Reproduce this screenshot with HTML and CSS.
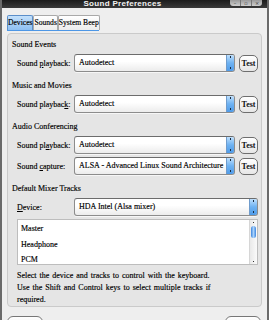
FILE: index.html
```html
<!DOCTYPE html>
<html lang="en">
<head>
    <meta charset="UTF-8">
    <meta name="viewport" content="width=device-width, initial-scale=1.0">
    <title>Sound Preferences</title>
    <link rel="stylesheet" href="styles.css">
</head>
<body>
    <div class="window">
        <div class="titlebar">
            <span class="title">Sound Preferences</span>
            <div class="wm-buttons">
                <span class="wm-btn">&#8211;</span>
                <span class="wm-btn">&#9643;</span>
                <span class="wm-btn">&#215;</span>
            </div>
        </div>

        <div class="content">
            <div class="tabs">
                <div class="tab active">Devices</div>
                <div class="tab">Sounds</div>
                <div class="tab">System Beep</div>
            </div>

            <div class="panel">
                <div class="section">
                    <div class="heading">Sound Events</div>
                    <div class="row">
                        <label class="field-label">Sound <u>p</u>layback:</label>
                        <div class="combo"><span class="combo-text">Autodetect</span><span class="combo-arrow"></span></div>
                        <button class="test">Test</button>
                    </div>
                </div>

                <div class="section">
                    <div class="heading">Music and Movies</div>
                    <div class="row">
                        <label class="field-label">Sound playbac<u>k</u>:</label>
                        <div class="combo"><span class="combo-text">Autodetect</span><span class="combo-arrow"></span></div>
                        <button class="test">Test</button>
                    </div>
                </div>

                <div class="section">
                    <div class="heading">Audio Conferencing</div>
                    <div class="row">
                        <label class="field-label">Sound pl<u>a</u>yback:</label>
                        <div class="combo"><span class="combo-text">Autodetect</span><span class="combo-arrow"></span></div>
                        <button class="test">Test</button>
                    </div>
                    <div class="row">
                        <label class="field-label">Sound <u>c</u>apture:</label>
                        <div class="combo"><span class="combo-text">ALSA - Advanced Linux Sound Architecture</span><span class="combo-arrow"></span></div>
                        <button class="test">Test</button>
                    </div>
                </div>

                <div class="section">
                    <div class="heading">Default Mixer Tracks</div>
                    <div class="row">
                        <label class="field-label"><u>D</u>evice:</label>
                        <div class="combo"><span class="combo-text">HDA Intel (Alsa mixer)</span><span class="combo-arrow"></span></div>
                    </div>
                    <div class="track-list">
                        <ul class="tracks">
                            <li>Master</li>
                            <li>Headphone</li>
                            <li>PCM</li>
                        </ul>
                        <div class="scrollbar">
                            <span class="sb-arrow"></span>
                            <span class="sb-thumb"></span>
                            <span class="sb-arrow"></span>
                        </div>
                    </div>
                    <p class="hint">Select the device and tracks to control with the keyboard.<br>
                        Use the Shift and Control keys to select multiple tracks if<br>
                        required.</p>
                </div>
            </div>

            <div class="buttons">
                <button class="btn"></button>
                <button class="btn"></button>
            </div>
        </div>
    </div>
</body>
</html>
```

FILE: styles.css
```css
body {
    margin: 0;
    font-family: "Liberation Serif", serif;
    font-size: 8px;
    color: #000;
    background: #ececec;
    -webkit-text-stroke: 0.15px #000;
}
.window {
    width: 269px;
    height: 320px;
    overflow: hidden;
    box-sizing: border-box;
    border-left: 2px solid #6a6a6a;
    border-right: 2px solid #6a6a6a;
    background: #eeeeee;
}
.titlebar {
    height: 8px;
    background: linear-gradient(#1c1c1c, #3a3a3a);
    display: flex;
    align-items: flex-end;
    position: relative;
    overflow: hidden;
}
.title {
    flex: 1;
    text-align: center;
    padding-right: 24px;
    font-family: "Liberation Sans", sans-serif;
    font-weight: bold;
    font-size: 8px;
    line-height: 8px;
    letter-spacing: 0.3px;
    color: #f2f2f2;
    -webkit-text-stroke: 0;
}
.wm-buttons {
    position: absolute;
    right: 5px;
    top: 0;
    display: flex;
    height: 6px;
    border-radius: 0 0 3px 3px;
    background: linear-gradient(#9a9a9a, #cfcfcf);
    overflow: hidden;
}
.wm-btn {
    width: 10px;
    font-family: "DejaVu Sans", sans-serif;
    font-size: 5px;
    line-height: 6px;
    text-align: center;
    color: #333;
    border-left: 1px solid #777;
    -webkit-text-stroke: 0;
}
.wm-btn:first-child {
    border-left: none;
}
.content {
    padding: 7px 5px 0 5px;
}
.tabs {
    display: flex;
    height: 15px;
    width: 92px;
    border-bottom: 1px solid #4d97e6;
}
.tab {
    padding: 0;
    font-size: 7.6px;
    line-height: 14px;
    white-space: nowrap;
    border: 1px solid #a9a9a9;
    border-bottom: none;
    border-radius: 2px 2px 0 0;
    background: linear-gradient(#ffffff, #ececec);
}
.tab.active {
    background: linear-gradient(#c3e0fb, #8ec0f2);
    border-color: #5b8ec9;
}
.panel {
    margin-top: 2px;
    height: 274px;
    box-sizing: border-box;
    border: 1px solid #cacaca;
    border-radius: 4px;
    background: #e5e5e5;
    padding: 6px 3px 0 4px;
}
.section {
    display: flex;
    flex-direction: column;
    gap: 3px;
    margin-bottom: 9px;
}
.heading {
    line-height: 10px;
    margin-bottom: 1px;
}
.row {
    display: flex;
    align-items: center;
    height: 18px;
    padding-left: 5px;
    gap: 4px;
}
.field-label {
    width: 53px;
    white-space: nowrap;
}
.combo {
    flex: 1;
    height: 16px;
    display: flex;
    border: 1px solid #8c8c8c;
    border-top-color: #6c6c6c;
    border-radius: 3px;
    background: linear-gradient(#ffffff 40%, #ececec);
    box-shadow: 0 1px 0 #f6f6f6;
    overflow: hidden;
}
.combo-text {
    flex: 1;
    padding-left: 4px;
    line-height: 16px;
    white-space: nowrap;
    overflow: hidden;
}
.combo-arrow {
    width: 7px;
    background:
        radial-gradient(circle at 50% 2px, #1a2b40 0.6px, transparent 1px),
        radial-gradient(circle at 50% 13px, #1a2b40 0.6px, transparent 1px),
        linear-gradient(#bfe0fd, #6eb2f2 50%, #4f9be8);
    border-left: 1px solid #6f9ccc;
}
.test {
    width: 19px;
    height: 17px;
    padding: 0;
    font-family: "Liberation Serif", serif;
    font-size: 8px;
    font-weight: bold;
    color: #111;
    border: 1px solid #6e6e6e;
    border-radius: 5px;
    background: linear-gradient(#ffffff, #e6e6e6);
    -webkit-text-stroke: 0;
}
.track-list {
    margin-left: 5px;
    height: 44px;
    display: flex;
    background: #ffffff;
    border: 1px solid #bdbdbd;
}
.tracks {
    flex: 1;
    list-style: none;
    margin: 0;
    padding: 1px 0 0 3px;
}
.tracks li {
    line-height: 15.5px;
}
.scrollbar {
    width: 7px;
    display: flex;
    flex-direction: column;
    align-items: center;
    border-left: 1px solid #d6d6d6;
    background: linear-gradient(90deg, #e9e9e9, #fafafa);
}
.sb-arrow {
    width: 7px;
    height: 5px;
    background: radial-gradient(circle, #333 0.6px, transparent 1px);
}
.sb-thumb {
    width: 5px;
    height: 12px;
    margin: 1px 0 auto;
    border-radius: 3px;
    background: linear-gradient(90deg, #3c85de, #a9d2fb 50%, #3c85de);
}
.hint {
    margin: 2px 0 0 5px;
    line-height: 12px;
    word-spacing: 1px;
}
.buttons {
    display: flex;
    justify-content: space-between;
    margin-top: 9px;
    padding: 0 1px 0 0;
}
.btn {
    width: 36px;
    height: 16px;
    border: 1px solid #777;
    border-radius: 6px;
    background: linear-gradient(#ffffff, #e8e8e8);
}
```
